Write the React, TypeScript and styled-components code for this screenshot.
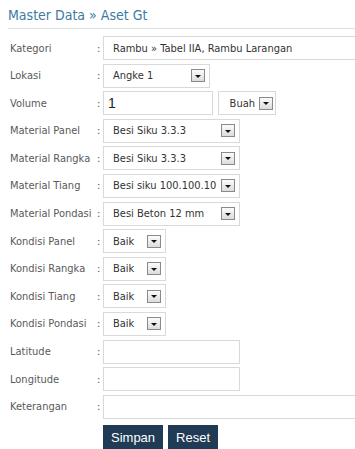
import React from 'react';
import styled, { createGlobalStyle } from 'styled-components';

const GlobalStyle = createGlobalStyle`
  html, body {
    margin: 0;
    padding: 0;
    background: #ffffff;
    overflow: hidden;
  }
`;

type BoxProps = {
  width: number;
};

const Page = styled.div`
  padding: 0 0 0 8px;
  overflow: hidden;
  font-family: 'DejaVu Sans Condensed', 'DejaVu Sans', sans-serif;
`;

const Title = styled.h2`
  margin: 0;
  height: 28px;
  line-height: 31px;
  font-size: 14px;
  font-weight: normal;
  color: #3b7aa1;
  border-bottom: 1px solid #dedede;
`;

const Form = styled.div`
  display: flex;
  flex-direction: column;
  gap: 3.6px;
  padding-top: 7px;
`;

const Row = styled.div`
  display: flex;
  align-items: center;
  height: 24px;
`;

const Label = styled.div`
  width: 87px;
  padding-left: 2px;
  font-size: 11px;
  color: #595959;
  white-space: nowrap;
  flex-shrink: 0;
`;

const Colon = styled.div`
  width: 6px;
  font-size: 11px;
  color: #595959;
  flex-shrink: 0;
`;

const Box = styled.div<BoxProps>`
  width: ${props => props.width}px;
  height: 24px;
  box-sizing: border-box;
  border: 1px solid #d9d9d9;
  display: flex;
  align-items: center;
  padding: 0 0 0 9px;
  font-size: 11px;
  color: #333333;
  white-space: nowrap;
  flex-shrink: 0;
`;

const BoxText = styled.span`
  flex: 1;
`;

const VolumeInput = styled(Box)`
  font-family: 'Liberation Sans', Arial, sans-serif;
  font-size: 14px;
  padding-left: 4px;
  color: #222222;
`;

const UnitBox = styled(Box)`
  margin-left: 5px;
  padding-left: 0;
  justify-content: flex-end;
  gap: 4px;
  padding-right: 2px;
`;

const ArrowButton = styled.div<{ flush?: boolean }>`
  width: 14px;
  height: 13px;
  box-sizing: border-box;
  border: 1px solid #8a8a8a;
  background: linear-gradient(#fbfbfb, #dcdcdc);
  display: flex;
  align-items: center;
  justify-content: center;
  margin-right: ${props => (props.flush ? 0 : 4)}px;
  flex-shrink: 0;

  &::after {
    content: '';
    border-left: 3px solid transparent;
    border-right: 3px solid transparent;
    border-top: 3px solid #111111;
    margin-top: 1px;
  }
`;

const Buttons = styled.div`
  display: flex;
  gap: 5px;
  padding-left: 95px;
  margin-top: 6px;
`;

const Button = styled.button`
  height: 26px;
  padding: 0 8px;
  border: none;
  background: #1f3b55;
  color: #ffffff;
  font-family: 'Liberation Sans', Arial, sans-serif;
  font-size: 13px;
`;

const Select = ({ width, value }: { width: number; value: string }) => (
  <Box width={width}>
    <BoxText>{value}</BoxText>
    <ArrowButton />
  </Box>
);

const Field = ({ label, children }: { label: string; children?: React.ReactNode }) => (
  <Row>
    <Label>{label}</Label>
    <Colon>:</Colon>
    {children}
  </Row>
);

const materials = [
  { label: 'Material Panel', value: 'Besi Siku 3.3.3' },
  { label: 'Material Rangka', value: 'Besi Siku 3.3.3' },
  { label: 'Material Tiang', value: 'Besi siku 100.100.10' },
  { label: 'Material Pondasi', value: 'Besi Beton 12 mm' },
];

const kondisi = ['Kondisi Panel', 'Kondisi Rangka', 'Kondisi Tiang', 'Kondisi Pondasi'];

export default function App() {
  return (
    <>
      <GlobalStyle />
      <Page>
        <Title>Master Data » Aset Gt</Title>
        <Form>
          <Field label="Kategori">
            <Box width={300}>
              <BoxText>Rambu » Tabel IIA, Rambu Larangan</BoxText>
            </Box>
          </Field>
          <Field label="Lokasi">
            <Select width={107} value="Angke 1" />
          </Field>
          <Field label="Volume">
            <VolumeInput width={110}>1</VolumeInput>
            <UnitBox width={58}>
              Buah
              <ArrowButton flush />
            </UnitBox>
          </Field>
          {materials.map(m => (
            <Field key={m.label} label={m.label}>
              <Select width={137} value={m.value} />
            </Field>
          ))}
          {kondisi.map(k => (
            <Field key={k} label={k}>
              <Select width={63} value="Baik" />
            </Field>
          ))}
          <Field label="Latitude">
            <Box width={137} />
          </Field>
          <Field label="Longitude">
            <Box width={137} />
          </Field>
          <Field label="Keterangan">
            <Box width={300} />
          </Field>
        </Form>
        <Buttons>
          <Button>Simpan</Button>
          <Button>Reset</Button>
        </Buttons>
      </Page>
    </>
  );
}
